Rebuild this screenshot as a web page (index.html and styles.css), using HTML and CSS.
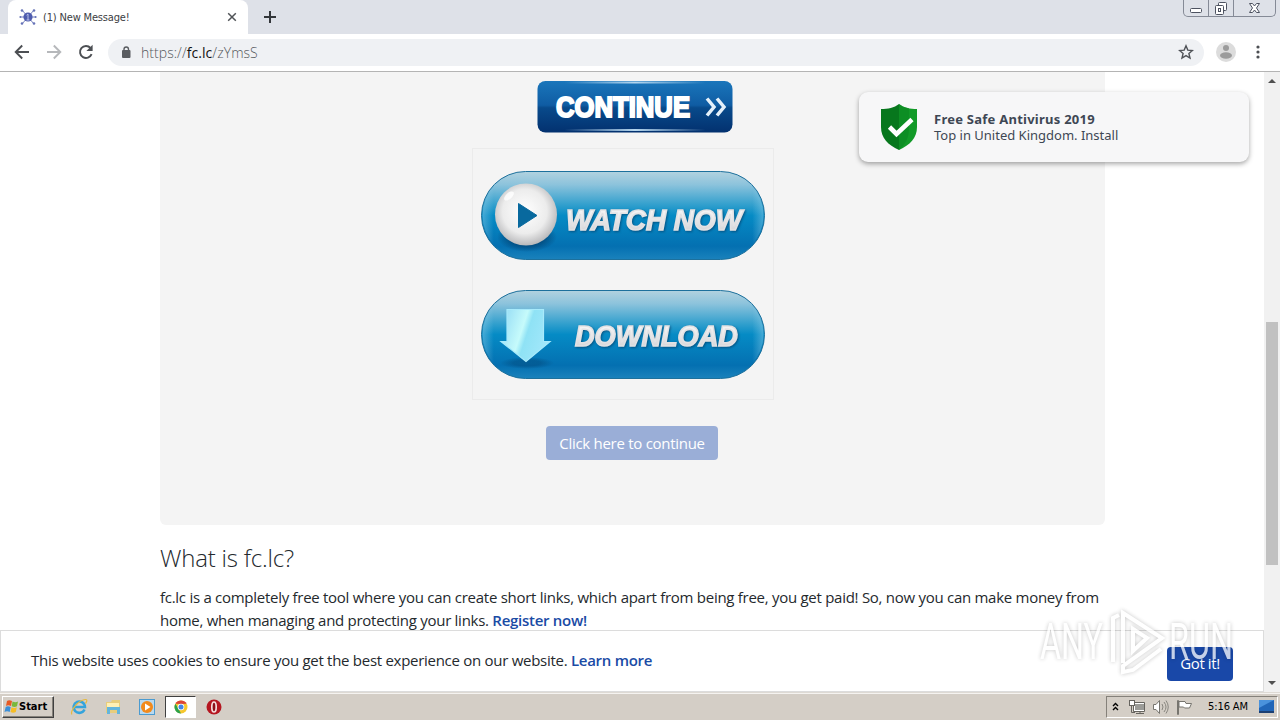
FILE: index.html
```html
<!DOCTYPE html>
<html lang="en">
<head>
    <meta charset="UTF-8">
    <meta name="viewport" content="width=device-width, initial-scale=1.0">
    <title>(1) New Message!</title>
    <link rel="stylesheet" href="styles.css">
</head>
<body>
    <!-- Tab strip -->
    <div class="tab-strip">
        <div class="tab-edge"></div>
        <div class="tab">
            <svg class="favicon" width="18" height="18" viewBox="0 0 18 18">
                <g stroke="#7480be" stroke-width="1"><path d="M9 9 3 2M9 9l6-7M9 9 3 16M9 9l6 7M1 9h16"/></g>
                <g fill="#6673b8"><circle cx="3" cy="2.5" r="1.3"/><circle cx="15" cy="2.5" r="1.3"/><circle cx="3" cy="15.5" r="1.3"/><circle cx="15" cy="15.5" r="1.3"/><circle cx="1.4" cy="9" r="1"/><circle cx="16.6" cy="9" r="1"/></g>
                <circle cx="9" cy="9" r="4.6" fill="#4f5cae"/>
                <path d="M9 6v6M7.6 7.2 9 6M7.5 12h3" stroke="#b9c0e8" fill="none"/>
            </svg>
            <span class="tab-title">(1) New Message!</span>
            <svg class="tab-close" width="10" height="10" viewBox="0 0 10 10"><path d="M1.2 1.2l7.6 7.6M8.8 1.2 1.2 8.8" stroke="#505357" stroke-width="1.5"/></svg>
        </div>
        <svg class="new-tab" width="14" height="14" viewBox="0 0 14 14"><path d="M7 1v12M1 7h12" stroke="#33363a" stroke-width="2"/></svg>
        <div class="window-buttons">
            <div class="win-btn"><svg width="24" height="16" viewBox="0 0 24 16"><rect x="6.500" y="8.500" width="11" height="4" rx="1" fill="#fff" stroke="#4d5260"/></svg></div>
            <div class="win-btn"><svg width="24" height="16" viewBox="0 0 24 16"><rect x="9.500" y="2.500" width="8" height="8" rx="1" fill="#fff" stroke="#4d5260"/><rect x="6.500" y="5.500" width="8" height="9" rx="1" fill="#fff" stroke="#4d5260"/><rect x="9.500" y="8.500" width="2" height="3" fill="none" stroke="#4d5260"/></svg></div>
            <div class="win-btn wide"><svg width="40" height="16" viewBox="0 0 40 16"><path d="M15.500 3.500h3l2 2.500 2-2.500h3L22.500 8l3 4.500h-3L20.500 10l-2 2.500h-3l3-4.500z" fill="#fff" stroke="#4d5260"/></svg></div>
        </div>
    </div>

    <!-- Address bar -->
    <div class="toolbar">
        <svg width="16" height="16" viewBox="0 0 16 16"><path d="M15 8H2M8.200 1.500 1.700 8l6.500 6.500" stroke="#4c4f53" stroke-width="1.9" fill="none"/></svg>
        <svg width="16" height="16" viewBox="0 0 16 16"><path d="M1 8h13M7.800 1.500 14.300 8l-6.500 6.500" stroke="#b6b8bb" stroke-width="1.9" fill="none"/></svg>
        <svg width="16" height="16" viewBox="0 0 16 16"><path d="M13.600 10.200A6 6 0 1 1 12.500 4" stroke="#4c4f53" stroke-width="1.9" fill="none"/><path d="M14.600.8v6.200H8.400z" fill="#4c4f53"/></svg>
        <div class="omnibox">
            <svg width="10" height="12" viewBox="0 0 10 12"><rect x="1" y="4" width="8.500" height="8" rx="1" fill="#5a5d61"/><path d="M3 5V3.200a2.250 2.250 0 0 1 4.500 0V5" stroke="#5a5d61" stroke-width="1.400" fill="none"/></svg>
            <span class="url">https://<b>fc.lc</b>/zYmsS</span>
            <svg class="star" width="16" height="16" viewBox="0 0 16 16"><path d="M8 1.800l1.800 4.300 4.600.4-3.500 3 1.100 4.600L8 11.600l-4 2.500 1.100-4.600-3.500-3 4.600-.4z" fill="none" stroke="#4f5257" stroke-width="1.400"/></svg>
        </div>
        <svg class="avatar" width="20" height="20" viewBox="0 0 20 20"><circle cx="10" cy="10" r="10" fill="#dcdcdc"/><circle cx="10" cy="6" r="3" fill="#9b9b9b"/><ellipse cx="10" cy="13.500" rx="6" ry="3.200" fill="#9b9b9b"/></svg>
        <svg class="dots" width="4" height="14" viewBox="0 0 4 14" fill="#4c4f53"><circle cx="2" cy="2" r="1.600"/><circle cx="2" cy="7" r="1.600"/><circle cx="2" cy="12" r="1.600"/></svg>
    </div>

    <div class="viewport">
        <div class="page">
            <div class="panel">
                <svg class="continue-btn" width="196" height="53" viewBox="0 0 196 53">
                    <defs>
                        <linearGradient id="navy" x2="0" y2="1"><stop offset="0" stop-color="#1a76bb"/><stop offset=".47" stop-color="#0f5ca3"/><stop offset=".52" stop-color="#084a8b"/><stop offset="1" stop-color="#03316f"/></linearGradient>
                        <linearGradient id="shine"><stop offset=".1" stop-color="#b5d6ee" stop-opacity="0"/><stop offset=".5" stop-color="#b5d6ee"/><stop offset=".9" stop-color="#b5d6ee" stop-opacity="0"/></linearGradient>
                    </defs>
                    <rect x=".5" y="1" width="195" height="51.500" rx="8" fill="url(#navy)"/>
                    <rect x="10" y="1.500" width="176" height="2" fill="url(#shine)"/>
                    <rect x="10" y="49" width="176" height="2" fill="url(#shine)"/>
                    <text x="19" y="37" textLength="134" lengthAdjust="spacingAndGlyphs" class="continue-text">CONTINUE</text>
                    <path d="M170 18.500l7 8.500-7 8.500M180 18.500l7 8.500-7 8.500" fill="none" stroke="#e4f0fa" stroke-width="3.500"/>
                </svg>

                <div class="ad-frame">
                    <svg width="284" height="89" viewBox="0 0 284 89">
                        <defs>
                            <linearGradient id="pill" x2="0" y2="1"><stop offset="0" stop-color="#b2d2df"/><stop offset=".15" stop-color="#8cc3dc"/><stop offset=".38" stop-color="#319fcd"/><stop offset=".5" stop-color="#058bc5"/><stop offset=".85" stop-color="#0470b1"/><stop offset="1" stop-color="#1a82bc"/></linearGradient>
                            <linearGradient id="rim"><stop offset="0" stop-color="#a6d8ee" stop-opacity=".4"/><stop offset=".04" stop-color="#a6d8ee" stop-opacity="0"/><stop offset=".96" stop-color="#a6d8ee" stop-opacity="0"/><stop offset="1" stop-color="#a6d8ee" stop-opacity=".4"/></linearGradient>
                            <radialGradient id="ball" cx=".48" cy=".45" r=".55"><stop offset="0" stop-color="#fff"/><stop offset=".65" stop-color="#ececec"/><stop offset="1" stop-color="#b9b9bb"/></radialGradient>
                            <radialGradient id="shade"><stop offset=".5" stop-color="#023f6e" stop-opacity=".8"/><stop offset="1" stop-color="#023f6e" stop-opacity="0"/></radialGradient>
                            <linearGradient id="silver" x2="0" y2="1"><stop offset="0" stop-color="#fff"/><stop offset="1" stop-color="#cfcfd2"/></linearGradient>
                            <linearGradient id="ice" x2="1" y2=".35"><stop offset="0" stop-color="#8fd8f4"/><stop offset=".5" stop-color="#c6fbfb"/><stop offset=".62" stop-color="#8fe2f5"/><stop offset="1" stop-color="#a0e7fa"/></linearGradient>
                        </defs>
                        <rect x=".5" y=".5" width="283" height="88" rx="44" fill="url(#pill)" stroke="#1d709c"/>
                        <rect x="1.500" y="1.500" width="281" height="86" rx="43" fill="url(#rim)"/>
                        <ellipse cx="46" cy="66" rx="30" ry="15" fill="url(#shade)"/>
                        <circle cx="45" cy="43.500" r="31" fill="url(#ball)"/>
                        <ellipse cx="28" cy="25" rx="6" ry="3" transform="rotate(-42 28 25)" fill="#fff" opacity=".8"/>
                        <path d="M37.500 32.500v24L56 44.500z" fill="#08699e" stroke="#08699e" stroke-linejoin="round"/>
                        <text x="85" y="59" textLength="176" lengthAdjust="spacingAndGlyphs" class="pill-text">WATCH NOW</text>
                    </svg>
                    <svg width="284" height="89" viewBox="0 0 284 89">
                        <rect x=".5" y=".5" width="283" height="88" rx="44" fill="url(#pill)" stroke="#1d709c"/>
                        <rect x="1.500" y="1.500" width="281" height="86" rx="43" fill="url(#rim)"/>
                        <ellipse cx="46" cy="73" rx="27" ry="6" fill="url(#shade)" opacity=".5"/>
                        <path d="M26 19.500h36.500v32h6.500L45 71.500l-25-20h6z" fill="url(#ice)" stroke="#a8eafb" stroke-width="1.200"/>
                        <text x="94" y="56" textLength="163" lengthAdjust="spacingAndGlyphs" class="pill-text">DOWNLOAD</text>
                    </svg>
                </div>

                <button class="click-btn">Click here to continue</button>
            </div>

            <h2>What is fc.lc?</h2>
            <p class="about">fc.lc is a completely free tool where you can create short links, which apart from being free, you get paid! So, now you can make money from<br>home, when managing and protecting your links. <a href="#">Register now!</a></p>

            <!-- Push notification -->
            <div class="notice">
                <svg width="38" height="48" viewBox="0 0 38 48">
                    <path d="M19 1c-5 4-11 5-18 5v18c0 11 7 18 18 23z" fill="#07771d"/>
                    <path d="M19 1c5 4 11 5 18 5v18c0 11-7 18-18 23z" fill="#129a28"/>
                    <path d="M19 1v46C26 41 29 34 29 25V5.300C25 4.500 22 3.200 19 1z" fill="#0a8721" opacity=".6"/>
                    <path d="M9.500 24l7 7L32 16.500" fill="none" stroke="#fff" stroke-width="4.600"/>
                </svg>
                <div class="notice-text">
                    <strong>Free Safe Antivirus 2019</strong>
                    <span>Top in United Kingdom. Install</span>
                </div>
            </div>

            <div class="cookie-bar">
                <span class="cookie-text">This website uses cookies to ensure you get the best experience on our website. <a href="#">Learn more</a></span>
                <button class="got-btn">Got it!</button>
            </div>

            <svg class="watermark" width="200" height="80" viewBox="0 0 200 80">
                <text x="5" y="55" textLength="63" lengthAdjust="spacingAndGlyphs">ANY</text>
                <text x="134" y="55" textLength="64" lengthAdjust="spacingAndGlyphs">RUN</text>
                <path d="M78 58V14l6-3M88 59V9l39 25-39 28v6l10-2 28-21M98 47V25l14 9z"/>
            </svg>
        </div>
        <div class="scrollbar">
            <svg width="8" height="4" viewBox="0 0 8 4"><path d="M0 4 4 0l4 4z" fill="#505050"/></svg>
            <div class="thumb"></div>
            <svg width="8" height="4" viewBox="0 0 8 4"><path d="M0 0l4 4 4-4z" fill="#505050"/></svg>
        </div>
    </div>

    <!-- Taskbar -->
    <div class="taskbar">
        <div class="start">
            <svg width="15" height="15" viewBox="0 0 15 15"><path d="M3 2q2-1.500 5 0L7 7Q4 5.500 2 7z" fill="#e75a24"/><path d="M8.500 2.500q3 1.500 5.500 0L13 7.300q-2.500 1.500-5.300 0z" fill="#79b83c"/><path d="M1.700 8q2-1.400 5 0l-1 5Q3 11.500.5 13z" fill="#3b8fd8"/><path d="M7.500 8.300q3 1.500 5.300 0l-1 4.700q-2.500 1.600-5.300 0z" fill="#f6bd25"/></svg>
            <span>Start</span>
        </div>
        <div class="quick">
            <svg width="18" height="18" viewBox="0 0 18 18"><path d="M14.500 11.500A5.700 5.700 0 1 1 15 9H4" fill="none" stroke="#35a4dc" stroke-width="2.500"/><path d="M2 16.500C-1 14 9 1 16 1.500c2 .5 0 3-.5 4" fill="none" stroke="#e7b93c" stroke-width="1.200"/></svg>
            <svg width="18" height="18" viewBox="0 0 18 18"><path d="M2 4h5l1-2h8v13H2z" fill="#e8cd7c"/><path d="M3 5h12v4H3z" fill="#fff0b5"/><path d="M3 9h13v7h-3v-4H6v4H3z" fill="#64b5dc"/></svg>
            <svg width="18" height="18" viewBox="0 0 18 18"><rect x="1.500" y="1.500" width="15" height="15" fill="#b9d9ef" stroke="#4b9bd0"/><circle cx="9" cy="9" r="6" fill="#f28a1c"/><path d="M7 5.500v7L12.500 9z" fill="#fff"/></svg>
            <div class="task-active">
                <svg width="14" height="14" viewBox="0 0 14 14"><circle cx="7" cy="7" r="6.500" fill="#f6c72d"/><path d="M1.400 3.700A6.500 6.500 0 0 1 12.600 3.700L7 4z" fill="#dc4437"/><path d="M1.400 3.700 4.500 9 7 13.500A6.500 6.500 0 0 1 1.400 3.700z" fill="#2ba24c"/><circle cx="7" cy="7" r="3.300" fill="#fff"/><circle cx="7" cy="7" r="2.500" fill="#4285e8"/></svg>
            </div>
            <svg width="16" height="16" viewBox="0 0 16 16"><circle cx="8" cy="8" r="7.500" fill="#b51620"/><ellipse cx="8" cy="8" rx="2.200" ry="5" fill="#8c0f17" stroke="#f5dede" stroke-width="1.700"/></svg>
        </div>
        <div class="tray">
            <svg width="7" height="9" viewBox="0 0 7 9"><path d="M1 4l2.500-2.500L6 4M1 8l2.500-2.500L6 8" stroke="#000" stroke-width="1.400" fill="none"/></svg>
            <svg class="net" width="17" height="16" viewBox="0 0 17 16"><rect x="5.500" y="4.500" width="10" height="7" fill="#9c9c98" stroke="#fff"/><path d="M4.500 3.500h11v9h-11zM7 14.500h8M11 12.500V15M2.500 7v6.500H6" fill="none" stroke="#66645f"/><rect x=".5" y="1.500" width="5" height="5" fill="#fff" stroke="#66645f"/></svg>
            <svg class="vol" width="17" height="16" viewBox="0 0 17 16"><path d="M1.500 5.500H4l3.500-4v13l-3.500-4H1.500z" fill="#fff" stroke="#77756f"/><path d="M10 5q2 3 0 6M12 3q4 5 0 10M14 1.500q4.500 6.500 0 13" fill="none" stroke="#88867f"/></svg>
            <svg class="flag" width="17" height="16" viewBox="0 0 17 16"><path d="M1.500 1.500h1v14h-1zM3 2.500h6l1 2h5.500l-2 4.500H8.500L7.500 8H3z" fill="#fff" stroke="#77756f"/></svg>
            <span class="clock">5:16 AM</span>
            <svg width="15" height="13" viewBox="0 0 15 13"><rect width="15" height="11" fill="#2166b8"/><path d="M0 0h15L0 8z" fill="#4a92dc"/><path d="M0 11h15v2H0z" fill="#1b3f73"/></svg>
        </div>
    </div>
</body>
</html>
```

FILE: styles.css
```css
* {
    box-sizing: border-box;
}
body {
    margin: 0;
    width: 1280px;
    height: 720px;
    overflow: hidden;
    display: flex;
    flex-direction: column;
    background: #fff;
    font-family: "Open Sans", sans-serif;
    color: #24292d;
}
svg {
    display: block;
    flex: none;
}
a {
    color: #1a4ba5;
    font-weight: 600;
    text-decoration: none;
}

/* Browser chrome */
.tab-strip {
    height: 34px;
    flex: none;
    display: flex;
    background: #dee1e8;
}
.tab-edge {
    width: 8px;
    border-radius: 0 0 8px 0;
}
.tab {
    width: 240px;
    display: flex;
    align-items: center;
    padding: 0 11px;
    background: #fff;
    border-radius: 8px 8px 0 0;
}
.tab-title {
    margin-left: 6px;
    font: 11px "DejaVu Sans Condensed", "DejaVu Sans", sans-serif;
    letter-spacing: -0.17px;
    white-space: nowrap;
    color: #3c4043;
}
.tab-close {
    margin-left: auto;
}
.new-tab {
    margin: 10px 0 0 15px;
}
.window-buttons {
    display: flex;
    height: 17px;
    margin-left: auto;
    margin-right: 4px;
    border: 1px solid #858a96;
    border-top: 0;
    border-radius: 0 0 5px 5px;
}
.win-btn {
    width: 25px;
    border-right: 1px solid #858a96;
}
.win-btn.wide {
    width: 41px;
    border: 0;
}
.toolbar {
    height: 38px;
    flex: none;
    display: flex;
    align-items: center;
    gap: 16px;
    padding: 0 20px 1px 14px;
    border-bottom: 1px solid #b4b4b4;
}
.omnibox {
    width: 1096px;
    height: 27px;
    display: flex;
    align-items: center;
    margin-left: -2px;
    padding: 0 10px 0 13px;
    background: #eff1f4;
    border-radius: 14px;
}
.url {
    margin-left: 10px;
    font-size: 14px;
    font-weight: 300;
    letter-spacing: 0.05px;
    color: #55585c;
}
.url b {
    font-weight: 400;
    color: #111;
}
.star {
    margin-left: auto;
}
.avatar {
    margin-left: -4px;
}
.dots {
    margin-left: auto;
}

/* Web page */
.viewport {
    flex: 1;
    min-height: 0;
    display: flex;
}
.page {
    position: relative;
    width: 1264px;
    overflow: hidden;
}
.panel {
    width: 945px;
    height: 453px;
    margin-left: 160px;
    padding-top: 8px;
    background: #f4f4f4;
    border-radius: 0 0 6px 6px;
}
.continue-btn {
    margin-left: 377px;
}
.continue-text {
    font: bold 29px "Liberation Sans", Arial, sans-serif;
    fill: #fff;
    stroke: #fff;
    stroke-width: 2px;
}
.ad-frame {
    width: 302px;
    height: 252px;
    display: flex;
    flex-direction: column;
    gap: 30px;
    margin: 15px 0 0 312px;
    padding: 22px 8px;
    border: 1px solid #ebebeb;
}
.pill-text {
    font: italic bold 30px "Liberation Sans", Arial, sans-serif;
    fill: url(#silver);
    stroke: #e2e2e4;
    stroke-width: 1.6px;
    filter: drop-shadow(1px 1px 1px rgba(3, 50, 90, 0.6));
}
.click-btn {
    display: block;
    width: 172px;
    height: 34px;
    margin: 26px 0 0 386px;
    padding: 0;
    border: 0;
    border-radius: 4px;
    background: #9aaed7;
    color: #fff;
    font: 15px/34px "Open Sans", sans-serif;
    letter-spacing: -0.28px;
    white-space: nowrap;
}
h2 {
    margin: 16px 0 0 160px;
    font-size: 24px;
    line-height: 34px;
    font-weight: 300;
    letter-spacing: -0.2px;
}
.about {
    margin: 11px 0 0 160px;
    font-size: 15px;
    line-height: 23px;
    letter-spacing: -0.275px;
    white-space: nowrap;
}
.notice {
    position: absolute;
    top: 20px;
    left: 859px;
    width: 390px;
    height: 70px;
    display: flex;
    align-items: center;
    padding-left: 21px;
    background: #f7f7f8;
    border-radius: 9px;
    box-shadow: 0 2px 5px rgba(0, 0, 0, 0.35);
}
.notice-text {
    display: flex;
    flex-direction: column;
    margin-left: 16px;
    font: 13px/16px "Noto Sans", sans-serif;
    color: #3e4754;
    white-space: nowrap;
}
.notice-text strong {
    letter-spacing: 0.25px;
}
.cookie-bar {
    position: absolute;
    left: 0;
    bottom: 0;
    width: 1264px;
    height: 62px;
    display: flex;
    justify-content: space-between;
    align-items: center;
    padding: 0 30px;
    background: #fff;
    border: 1px solid #dcdcdc;
}
.cookie-text {
    margin-top: -2px;
    font-size: 15px;
    letter-spacing: -0.28px;
    white-space: nowrap;
}
.got-btn {
    width: 66px;
    height: 34px;
    margin-top: 6px;
    padding: 0 0 1px;
    border: 0;
    border-radius: 4px;
    background: #1948a8;
    color: #fff;
    font: 15px/33px "Open Sans", sans-serif;
    letter-spacing: -0.4px;
}
.watermark {
    position: absolute;
    left: 1035px;
    top: 532px;
    font: 50px "Roboto", sans-serif;
    fill: #fff;
    opacity: 0.75;
    filter: drop-shadow(0 0 2px rgba(0, 0, 0, 0.3));
}
.watermark path {
    fill: none;
    stroke: #fff;
    stroke-width: 4px;
}
.scrollbar {
    width: 16px;
    display: flex;
    flex-direction: column;
    align-items: center;
    padding: 7px 0;
    background: #f1f1f1;
}
.thumb {
    width: 12px;
    height: 243px;
    margin: 239px 0 auto;
    background: #c1c1c1;
}

/* Taskbar */
.taskbar {
    height: 28px;
    flex: none;
    display: flex;
    align-items: center;
    padding: 0 2px;
    background: #d4cec6;
    border-top: 1px solid #dedad4;
    box-shadow: inset 0 1px #f5f3f0;
}
.start {
    width: 52px;
    height: 22px;
    display: flex;
    align-items: center;
    padding-left: 1px;
    border: 1px solid;
    border-color: #fff #404040 #404040 #fff;
    box-shadow: inset -1px -1px #85817a;
    font: bold 11px "DejaVu Sans Condensed", "DejaVu Sans", sans-serif;
    color: #000;
}
.quick {
    display: flex;
    align-items: center;
    gap: 16px;
    margin-left: 16px;
}
.task-active {
    width: 31px;
    height: 22px;
    display: flex;
    align-items: center;
    justify-content: center;
    margin: 0 -6px 0 -7px;
    border: 1px solid;
    border-color: #404040 #fff #fff #404040;
    background: #fff;
}
.tray {
    width: 172px;
    height: 22px;
    display: flex;
    align-items: center;
    margin-left: auto;
    padding-left: 5px;
    border: 1px solid;
    border-color: #85817a #fff #fff #85817a;
}
.net {
    margin-left: 10px;
}
.vol {
    margin-left: 6px;
}
.flag {
    margin-left: 7px;
}
.clock {
    width: 42px;
    margin: 0 9px 0 15px;
    font: 11px "DejaVu Sans Condensed", "DejaVu Sans", sans-serif;
    letter-spacing: -0.1px;
    white-space: nowrap;
    color: #000;
}
```
